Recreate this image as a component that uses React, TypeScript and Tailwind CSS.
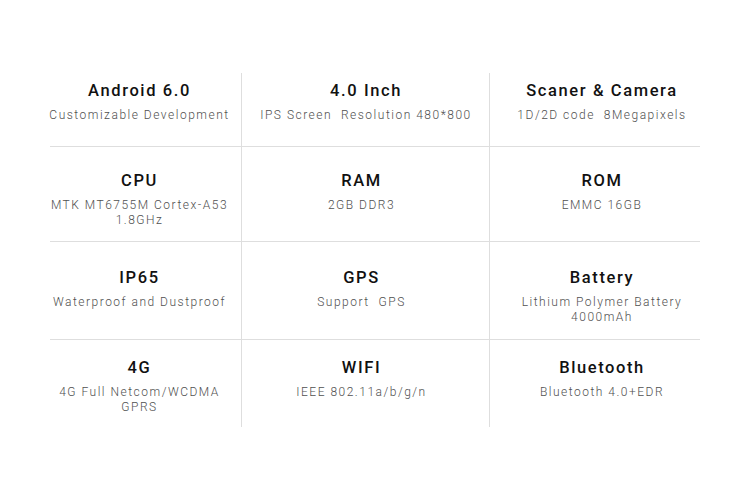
import React from "react";

type Cell = { title: string; lines: string[] };

const rows: { h: string; pt: string; cells: Cell[] }[] = [
  {
    h: "h-[74px]",
    pt: "pt-[8px]",
    cells: [
      { title: "Android 6.0", lines: ["Customizable Development"] },
      { title: "4.0 Inch", lines: ["IPS Screen  Resolution 480*800"] },
      { title: "Scaner & Camera", lines: ["1D/2D code  8Megapixels"] },
    ],
  },
  {
    h: "h-[95px]",
    pt: "pt-[24px]",
    cells: [
      { title: "CPU", lines: ["MTK MT6755M Cortex-A53", "1.8GHz"] },
      { title: "RAM", lines: ["2GB DDR3"] },
      { title: "ROM", lines: ["EMMC 16GB"] },
    ],
  },
  {
    h: "h-[98px]",
    pt: "pt-[26px]",
    cells: [
      { title: "IP65", lines: ["Waterproof and Dustproof"] },
      { title: "GPS", lines: ["Support  GPS"] },
      { title: "Battery", lines: ["Lithium Polymer Battery", "4000mAh"] },
    ],
  },
  {
    h: "h-[87px]",
    pt: "pt-[18px]",
    cells: [
      { title: "4G", lines: ["4G Full Netcom/WCDMA", "GPRS"] },
      { title: "WIFI", lines: ["IEEE 802.11a/b/g/n"] },
      { title: "Bluetooth", lines: ["Bluetooth 4.0+EDR"] },
    ],
  },
];

function colClass(ri: number, ci: number) {
  if (ci === 0) return "w-[192px] shrink-0 border-r border-[#dedede] pr-[12px]";
  if (ci === 1)
    return ri === 0
      ? "w-[248px] shrink-0 border-r border-[#dedede] pl-[1px]"
      : "w-[248px] shrink-0 border-r border-[#dedede] pr-[8px]";
  return "flex-1 pl-[14px]";
}

function CellView({ cell, pt }: { cell: Cell; pt: string }) {
  return (
    <div className={`flex flex-col items-center ${pt}`}>
      <div className="text-[16.5px] leading-[20px] font-medium tracking-[1.6px] text-[#111111] whitespace-pre">
        {cell.title}
      </div>
      <div className="mt-[7px] flex flex-col items-center">
        {cell.lines.map((l, i) => (
          <div
            key={i}
            className="text-[12px] leading-[15px] font-light tracking-[1.5px] text-[#505050] whitespace-pre"
          >
            {l}
          </div>
        ))}
      </div>
    </div>
  );
}

export default function App() {
  return (
    <div
      className="w-[750px] h-[500px] bg-white pt-[73px] pl-[50px]"
      style={{ fontFamily: "Roboto, 'Liberation Sans', sans-serif" }}
    >
      <div className="w-[650px] flex flex-col">
        {rows.map((row, ri) => (
          <div
            key={ri}
            className={`flex ${row.h} ${ri < rows.length - 1 ? "border-b border-[#dedede]" : ""}`}
          >
            {row.cells.map((c, ci) => (
              <div key={ci} className={colClass(ri, ci)}>
                <CellView cell={c} pt={row.pt} />
              </div>
            ))}
          </div>
        ))}
      </div>
    </div>
  );
}
